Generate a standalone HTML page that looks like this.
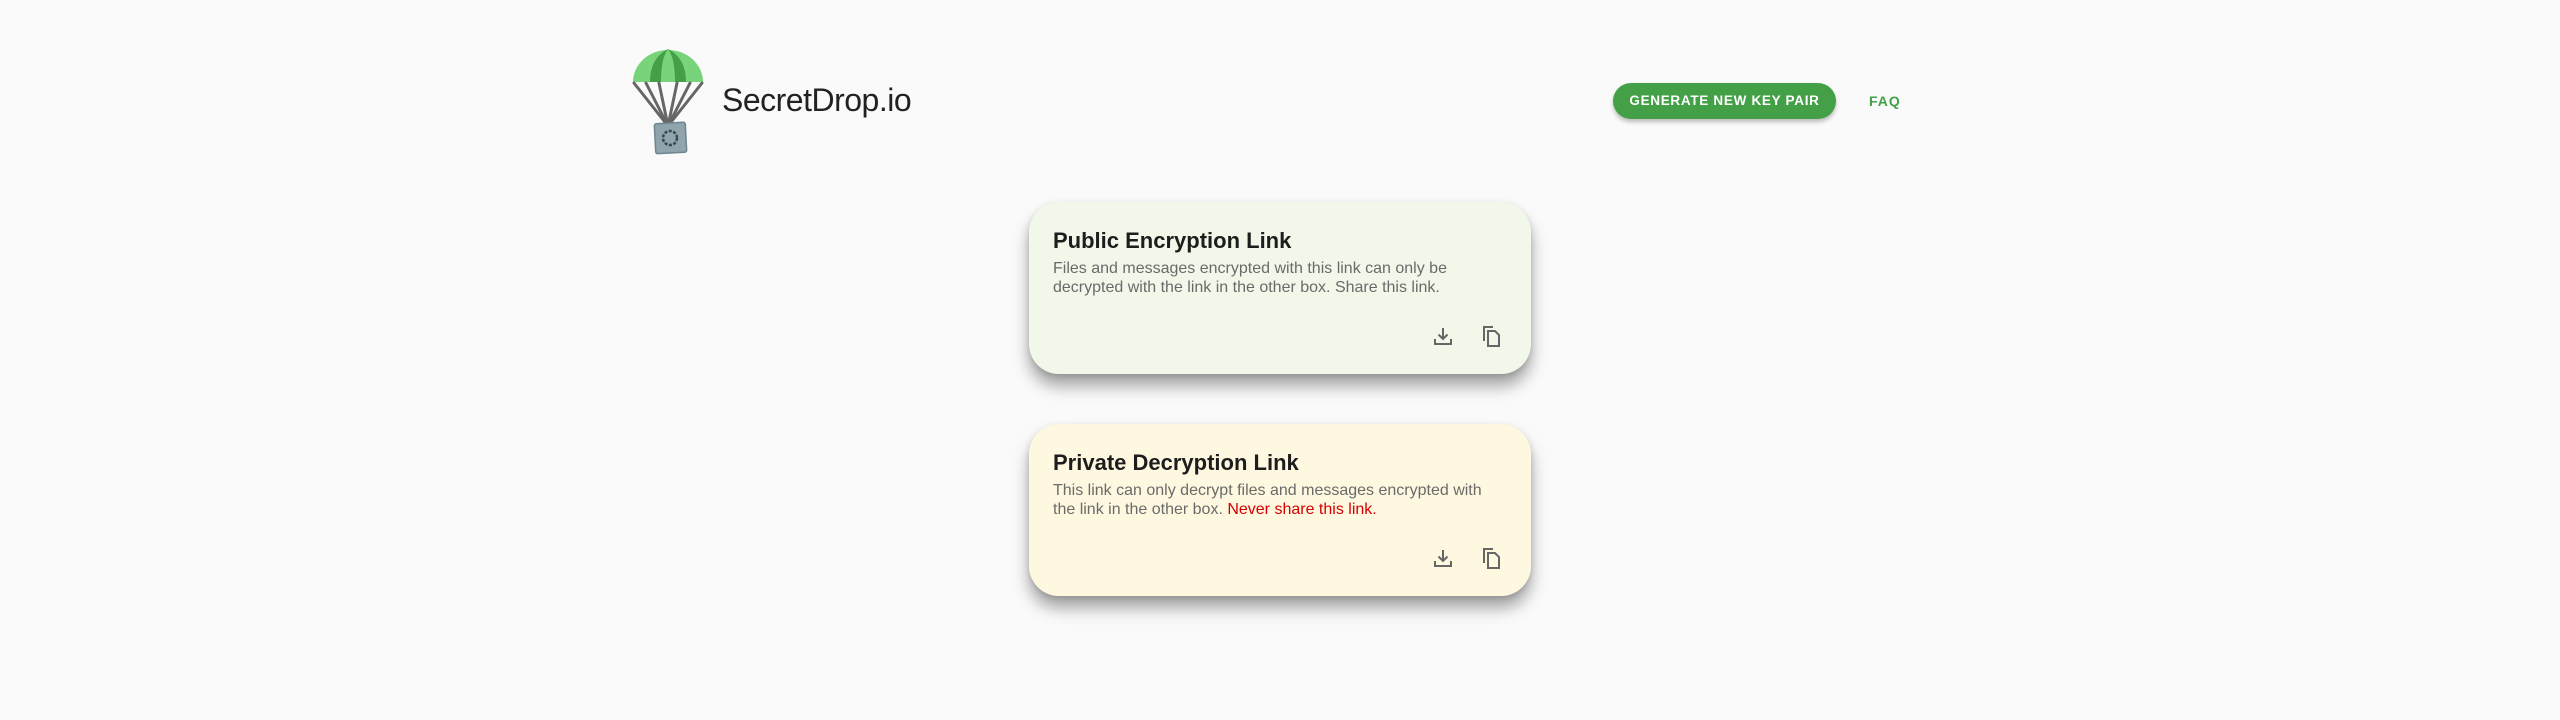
<!DOCTYPE html>
<html><head><meta charset="utf-8"><style>
*{box-sizing:border-box;margin:0;padding:0}
body{width:2560px;height:720px;background:#fafafa;font-family:"Liberation Sans",sans-serif;position:relative;overflow:hidden}
.brand{position:absolute;left:722px;top:82px;font-size:32px;font-weight:300;color:#222;letter-spacing:-0.5px}
.btn{position:absolute;left:1613px;top:83px;width:223px;height:36px;border-radius:18px;background:#43a047;color:#fff;font-size:13.5px;font-weight:bold;letter-spacing:0.7px;text-align:center;line-height:36px;box-shadow:0 3px 4px rgba(0,0,0,.25)}
.faq{position:absolute;left:1869px;top:93px;font-size:14px;font-weight:bold;color:#43a047;letter-spacing:1px}
.card{position:absolute;left:1029px;width:502px;height:172px;border-radius:30px;box-shadow:0 12px 16px rgba(0,0,0,.35),0 2px 6px rgba(0,0,0,.12);padding:24px 24px}
.card h2{font-size:22px;font-weight:bold;color:#1d1d1d;line-height:26px;margin-top:2px}
.card p{font-size:16px;color:#6a6a6a;line-height:19px;margin-top:5px}
.ic{position:absolute;top:122px}
</style></head><body>
<svg style="position:absolute;left:630px;top:46px" width="76" height="110" viewBox="0 0 76 110">
<path d="M3 36 A35 32 0 0 1 73 36 Z" fill="#77d47a"/>
<path d="M20 36 Q20 12 38 3 Q56 12 56 36 Z" fill="#43a047"/>
<path d="M31 36 Q31 12 38 3 Q45 12 45 36 Z" fill="#77d47a"/>
<g stroke="#666" stroke-width="3" fill="none" stroke-linecap="round">
<line x1="4" y1="37" x2="38" y2="80"/><line x1="16" y1="37" x2="38" y2="80"/><line x1="29" y1="37" x2="38" y2="80"/>
<line x1="47" y1="37" x2="38" y2="80"/><line x1="60" y1="37" x2="38" y2="80"/><line x1="72" y1="37" x2="38" y2="80"/>
</g>
<rect x="25" y="77" width="31" height="30" rx="2" fill="#8fa4ad" stroke="#6f858f" stroke-width="1.5" transform="rotate(-3 40 92)"/>
<circle cx="40" cy="92" r="7" fill="none" stroke="#37474f" stroke-width="2.5" stroke-dasharray="3 1.5"/>
</svg>
<div class="brand">SecretDrop.io</div>
<div class="btn">GENERATE NEW KEY PAIR</div>
<div class="faq">FAQ</div>

<div class="card" style="top:202px;background:#f1f8e9">
<h2>Public Encryption Link</h2>
<p>Files and messages encrypted with this link can only be<br>decrypted with the link in the other box. Share this link.</p>
<svg class="ic" style="left:402px" width="24" height="24" viewBox="0 0 24 24"><path d="M4 15v5h16v-5M12 4v11M7.5 10.5 12 15l4.5-4.5" fill="none" stroke="#666" stroke-width="2"/></svg>
<svg class="ic" style="left:450px" width="24" height="24" viewBox="0 0 24 24"><path d="M5 17V3h9" fill="none" stroke="#666" stroke-width="2"/><path d="M9 7h7l4 4v11H9Z" fill="none" stroke="#666" stroke-width="2"/></svg>
</div>

<div class="card" style="top:424px;background:#fff8e1">
<h2>Private Decryption Link</h2>
<p>This link can only decrypt files and messages encrypted with<br>the link in the other box. <span style="color:#d50000">Never share this link.</span></p>
<svg class="ic" style="left:402px" width="24" height="24" viewBox="0 0 24 24"><path d="M4 15v5h16v-5M12 4v11M7.5 10.5 12 15l4.5-4.5" fill="none" stroke="#666" stroke-width="2"/></svg>
<svg class="ic" style="left:450px" width="24" height="24" viewBox="0 0 24 24"><path d="M5 17V3h9" fill="none" stroke="#666" stroke-width="2"/><path d="M9 7h7l4 4v11H9Z" fill="none" stroke="#666" stroke-width="2"/></svg>
</div>
</body></html>
